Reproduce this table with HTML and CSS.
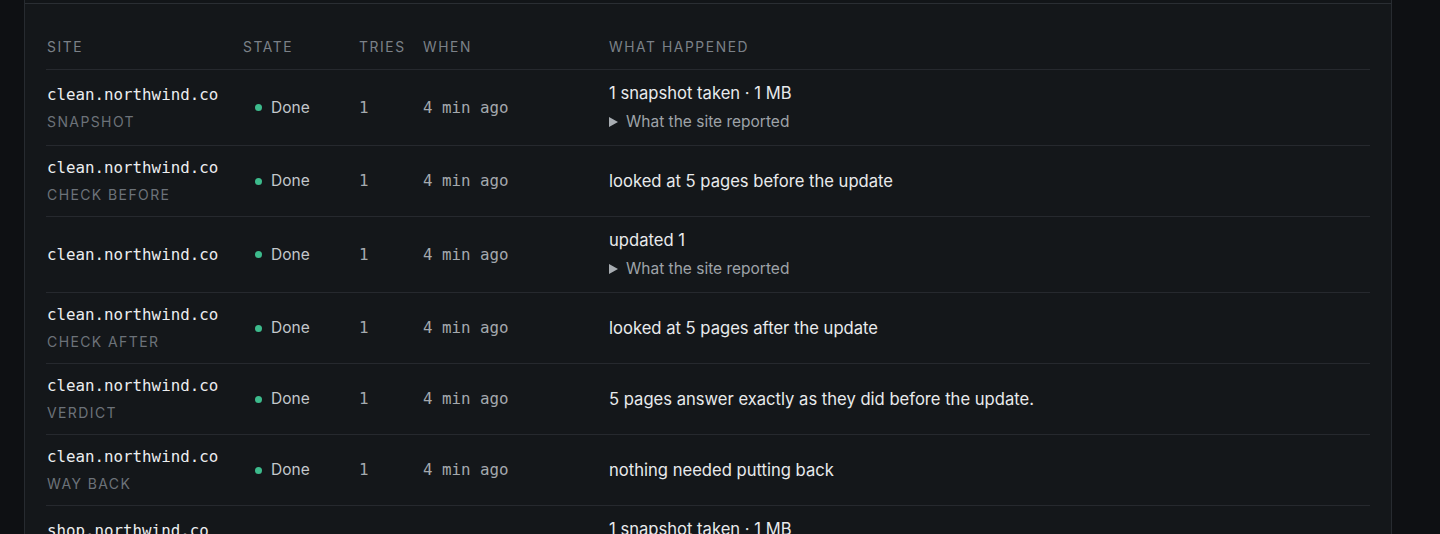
FILE: index.html
```html
<!DOCTYPE html>
<html lang="en">
<head>
<meta charset="utf-8">
<title>Runs</title>
<link rel="stylesheet" href="styles.css">
</head>
<body>
<div class="page">
  <section class="card">
    <div class="card-strip"></div>
    <div class="table">
      <div class="row head">
        <div>Site</div>
        <div>State</div>
        <div>Tries</div>
        <div>When</div>
        <div>What happened</div>
      </div>

      <div class="row">
        <div class="site"><div class="host">clean.northwind.co</div><div class="step">Snapshot</div></div>
        <div class="state"><span class="dot"></span>Done</div>
        <div class="mono num">1</div>
        <div class="mono when">4 min ago</div>
        <div class="what"><div class="line">1 snapshot taken · 1 MB</div><details class="more"><summary>What the site reported</summary></details></div>
      </div>

      <div class="row">
        <div class="site"><div class="host">clean.northwind.co</div><div class="step">Check before</div></div>
        <div class="state"><span class="dot"></span>Done</div>
        <div class="mono num">1</div>
        <div class="mono when">4 min ago</div>
        <div class="what"><div class="line">looked at 5 pages before the update</div></div>
      </div>

      <div class="row">
        <div class="site"><div class="host">clean.northwind.co</div></div>
        <div class="state"><span class="dot"></span>Done</div>
        <div class="mono num">1</div>
        <div class="mono when">4 min ago</div>
        <div class="what"><div class="line">updated 1</div><details class="more"><summary>What the site reported</summary></details></div>
      </div>

      <div class="row">
        <div class="site"><div class="host">clean.northwind.co</div><div class="step">Check after</div></div>
        <div class="state"><span class="dot"></span>Done</div>
        <div class="mono num">1</div>
        <div class="mono when">4 min ago</div>
        <div class="what"><div class="line">looked at 5 pages after the update</div></div>
      </div>

      <div class="row">
        <div class="site"><div class="host">clean.northwind.co</div><div class="step">Verdict</div></div>
        <div class="state"><span class="dot"></span>Done</div>
        <div class="mono num">1</div>
        <div class="mono when">4 min ago</div>
        <div class="what"><div class="line">5 pages answer exactly as they did before the update.</div></div>
      </div>

      <div class="row">
        <div class="site"><div class="host">clean.northwind.co</div><div class="step">Way back</div></div>
        <div class="state"><span class="dot"></span>Done</div>
        <div class="mono num">1</div>
        <div class="mono when">4 min ago</div>
        <div class="what"><div class="line">nothing needed putting back</div></div>
      </div>

      <div class="row">
        <div class="site"><div class="host">shop.northwind.co</div><div class="step">Snapshot</div></div>
        <div class="state"><span class="dot"></span>Done</div>
        <div class="mono num">1</div>
        <div class="mono when">4 min ago</div>
        <div class="what"><div class="line">1 snapshot taken · 1 MB</div><details class="more"><summary>What the site reported</summary></details></div>
      </div>
    </div>
  </section>
</div>
</body>
</html>
```

FILE: styles.css
```css
* { box-sizing: border-box; }
html, body {
  margin: 0;
  height: 100%;
  overflow: hidden;
  background: #0e1013;
}
body {
  font-family: Inter, "Noto Sans", sans-serif;
  color: #e4e6e9;
}
.page {
  padding: 0 48px 0 24px;
}
.card {
  background: #14171a;
  border-left: 1px solid #272b30;
  border-right: 1px solid #272b30;
  min-height: 700px;
}
.card-strip {
  height: 4px;
  border-bottom: 1px solid #2a2e33;
  background: #121518;
}
.table {
  padding: 33px 21px 0 21px;
}
.row {
  display: grid;
  grid-template-columns: 197px 116px 64px 186px 1fr;
  align-items: center;
  padding: 12px 0 12px;
  border-bottom: 1px solid #26292e;
}
.row.head {
  padding: 0 0 12px;
  font-size: 13.8px;
  line-height: 20px;
  letter-spacing: 1.6px;
  text-transform: uppercase;
  color: #7b8188;
}
.row.head > div:first-child { padding-left: 1px; }
.site { padding-left: 1px; }
.host {
  font-family: "DejaVu Sans Mono", "Liberation Mono", monospace;
  font-size: 15.8px;
  line-height: 20px;
  color: #eceef0;
}
.step {
  margin-top: 7px;
  font-size: 14px;
  line-height: 19px;
  letter-spacing: 1.4px;
  text-transform: uppercase;
  color: #6c7279;
}
.state {
  display: flex;
  align-items: center;
  gap: 9px;
  padding-left: 12px;
  font-size: 15.5px;
  line-height: 20px;
  color: #c3c7cb;
}
.dot {
  width: 7px;
  height: 7px;
  border-radius: 50%;
  background: #3dbb8c;
}
.mono {
  font-family: "DejaVu Sans Mono", "Liberation Mono", monospace;
  font-size: 15.8px;
  line-height: 20px;
  color: #a4a9ae;
}
.what .line {
  font-size: 16.6px;
  line-height: 22px;
  color: #e8eaec;
}
.more {
  margin-top: 7px;
}
.more summary {
  list-style: none;
  display: flex;
  align-items: center;
  gap: 8px;
  font-size: 15.5px;
  line-height: 22px;
  color: #9ea3a8;
  cursor: pointer;
}
.more summary::-webkit-details-marker { display: none; }
.more summary::before {
  content: "";
  width: 0;
  height: 0;
  border-left: 9px solid #a8adb2;
  border-top: 5px solid transparent;
  border-bottom: 5px solid transparent;
}
```
